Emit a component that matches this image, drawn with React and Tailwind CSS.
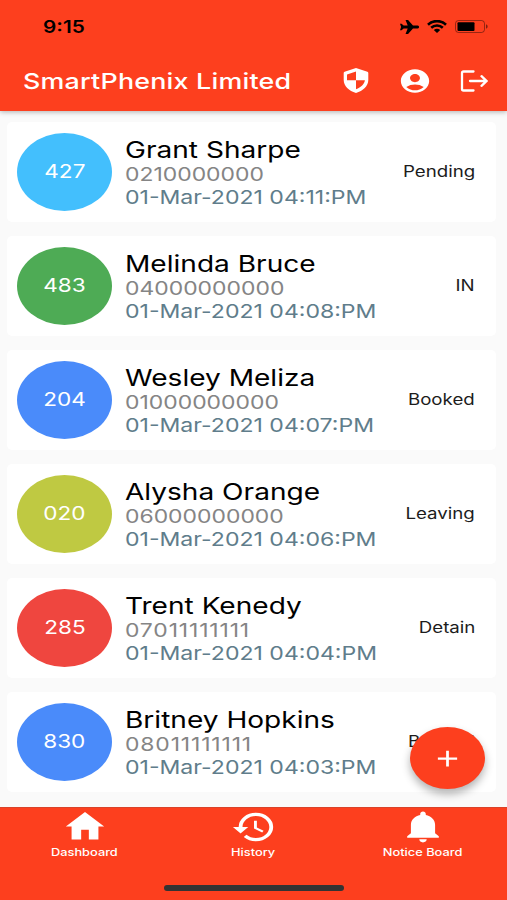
import React from "react";
import clsx from "clsx";
import {
  MdAccountCircle,
  MdAdd,
  MdHistory,
  MdHome,
} from "react-icons/md";
import { IoMdNotifications } from "react-icons/io";

const visitors = [
  { id: "427", name: "Grant Sharpe", phone: "0210000000", time: "01-Mar-2021 04:11:PM", status: "Pending", color: "bg-[#43bffd]" },
  { id: "483", name: "Melinda Bruce", phone: "04000000000", time: "01-Mar-2021 04:08:PM", status: "IN", color: "bg-[#4eab55]" },
  { id: "204", name: "Wesley Meliza", phone: "01000000000", time: "01-Mar-2021 04:07:PM", status: "Booked", color: "bg-[#4a8bfa]" },
  { id: "020", name: "Alysha Orange", phone: "06000000000", time: "01-Mar-2021 04:06:PM", status: "Leaving", color: "bg-[#bfc942]" },
  { id: "285", name: "Trent Kenedy", phone: "07011111111", time: "01-Mar-2021 04:04:PM", status: "Detain", color: "bg-[#ef463f]" },
  { id: "830", name: "Britney Hopkins", phone: "08011111111", time: "01-Mar-2021 04:03:PM", status: "Booked", color: "bg-[#4a8bfa]" },
];

function StatusBar() {
  return (
    <div className="h-[50px] flex items-center justify-between pl-[43px] pr-[19px] pt-[3px] text-black">
      <span className="mt-[2px] origin-left scale-x-[1.22] text-[17px] font-semibold">9:15</span>
      <div className="flex items-center">
        <svg className="w-[19px] h-[14px]" viewBox="1.5 2 20.5 19" preserveAspectRatio="none" fill="currentColor">
          <path d="M7.5 21h2.7l5.3-7.6h5c.9 0 1.6-.9 1.6-1.9s-.7-1.9-1.6-1.9h-5L10.2 2H7.5l2.3 7.6H5.4L3.2 7H1.5l1.2 4.5L1.5 16h1.7l2.2-2.6h4.4z" />
        </svg>
        <svg className="w-[20px] h-[13px] ml-[8px]" viewBox="0 0 20 13" preserveAspectRatio="none" fill="none" stroke="currentColor" strokeWidth="2.6">
          <path d="M1 4.7a13 13 0 0 1 18 0M4.2 7.8a8.4 8.4 0 0 1 11.6 0" />
          <path d="M6.8 10.1a4.8 4.8 0 0 1 6.4 0L10 13z" fill="currentColor" stroke="none" />
        </svg>
        <svg className="w-[33px] h-[13px] ml-[8px]" viewBox="0 0 33 13">
          <rect x=".5" y=".5" width="29" height="12" rx="3" fill="none" stroke="#000" strokeOpacity=".4" />
          <rect x="2.5" y="2.3" width="17" height="8.6" rx="1" />
          <path d="M31 4.3c2.2.8 2.2 3.6 0 4.4z" fillOpacity=".5" />
        </svg>
      </div>
    </div>
  );
}

function Header() {
  return (
    <header className="relative z-10 h-[111px] shrink-0 bg-[#fd3f1e] text-white shadow-[0_1px_5px_rgba(0,0,0,0.3)]">
      <StatusBar />
      <div className="h-[61px] flex items-center pl-[23px] pr-[19px]">
        <h1 className="flex-1 mt-[2px] origin-left scale-x-[1.22] text-[22px] font-medium tracking-[0.17px] whitespace-nowrap">
          SmartPhenix Limited
        </h1>
        <svg className="w-[26px] h-[25px]" viewBox="0 0 26 25" fill="currentColor">
          <path fillRule="evenodd" d="M13 0 24.4 3.8q.9.4.9 1.3V12c0 6-5.3 11-12.3 13C6 23 .7 18 .7 12V5.1q0-.9.9-1.3zM13 3.4 4 6.4V12.3H13v8.9c5.2-1.8 8.3-4.9 8.9-8.9H13z" />
        </svg>
        <MdAccountCircle className="w-[34px] h-[28px] ml-[29px]" preserveAspectRatio="none" />
        <svg className="w-[28px] h-[22px] ml-[28px]" viewBox="0 0 28 22" fill="none" stroke="currentColor" strokeWidth="2.3" strokeLinecap="round">
          <path d="M13.5 1.5H3.5q-1.5 0-1.5 1.5v16q0 1.5 1.5 1.5h10M10 11h16M21.5 6.2l5 4.8-5 4.8" />
        </svg>
      </div>
    </header>
  );
}

function VisitorCard({ visitor }) {
  return (
    <li className="h-[100px] shrink-0 flex items-center rounded-[5px] bg-white pl-[10px] pr-[21px]">
      <div className={clsx("w-[95px] h-[78px] shrink-0 rounded-[50%] flex items-center justify-center text-white", visitor.color)}>
        <span className="scale-x-[1.22] text-[18.5px]">{visitor.id}</span>
      </div>
      <div className="ml-[13px] mt-[2px] flex-1 flex flex-col items-start whitespace-nowrap">
        <span className="origin-left scale-x-[1.22] text-[23px] leading-[27px] text-black">{visitor.name}</span>
        <span
          className={clsx(
            "origin-left scale-x-[1.22] text-[18.8px] leading-[22px] text-[#858585]",
            visitor.phone.includes("111") && "tracking-[0.7px]"
          )}
        >
          {visitor.phone}
        </span>
        <span className="origin-left scale-x-[1.22] text-[18.9px] leading-[23px] text-[#607d8b]">{visitor.time}</span>
      </div>
      <span className="origin-right scale-x-[1.22] text-[15.3px] text-[#1c1c1c]">{visitor.status}</span>
    </li>
  );
}

function NavItem({ icon, label }) {
  return (
    <button className="flex-1 flex flex-col items-center">
      <span className="h-[37px] flex items-center justify-center">{icon}</span>
      <span className="mt-[1px] scale-x-[1.22] text-[10.5px] leading-[14px] font-medium">{label}</span>
    </button>
  );
}

function BottomNav() {
  return (
    <nav className="h-[93px] shrink-0 bg-[#fd3f1e] border-t border-[#d9432a] text-white flex flex-col">
      <div className="flex">
        <NavItem label="Dashboard" icon={<MdHome className="w-[46px] h-[39px]" preserveAspectRatio="none" />} />
        <NavItem label="History" icon={<MdHistory className="w-[46px] h-[38px]" preserveAspectRatio="none" />} />
        <NavItem label="Notice Board" icon={<IoMdNotifications className="w-[46px] h-[38px]" preserveAspectRatio="none" />} />
      </div>
      <div className="mt-[25px] mx-auto w-[180px] h-[6px] rounded-full bg-[#333]" />
    </nav>
  );
}

export default function App() {
  return (
    <div className="relative w-[507px] h-[900px] overflow-hidden flex flex-col bg-[#fafafa] font-['Inter',sans-serif]">
      <Header />
      <ul className="flex-1 flex flex-col gap-[14px] pt-[11px] pl-[7px] pr-[11px]">
        {visitors.map((visitor) => (
          <VisitorCard key={visitor.id} visitor={visitor} />
        ))}
      </ul>
      <BottomNav />
      <button className="absolute left-[410px] top-[727px] w-[75px] h-[62px] rounded-[50%] bg-[#fd3f1e] text-white flex items-center justify-center shadow-[0_5px_8px_rgba(0,0,0,0.3)]">
        <MdAdd className="w-[33px] h-[27px]" preserveAspectRatio="none" />
      </button>
    </div>
  );
}
